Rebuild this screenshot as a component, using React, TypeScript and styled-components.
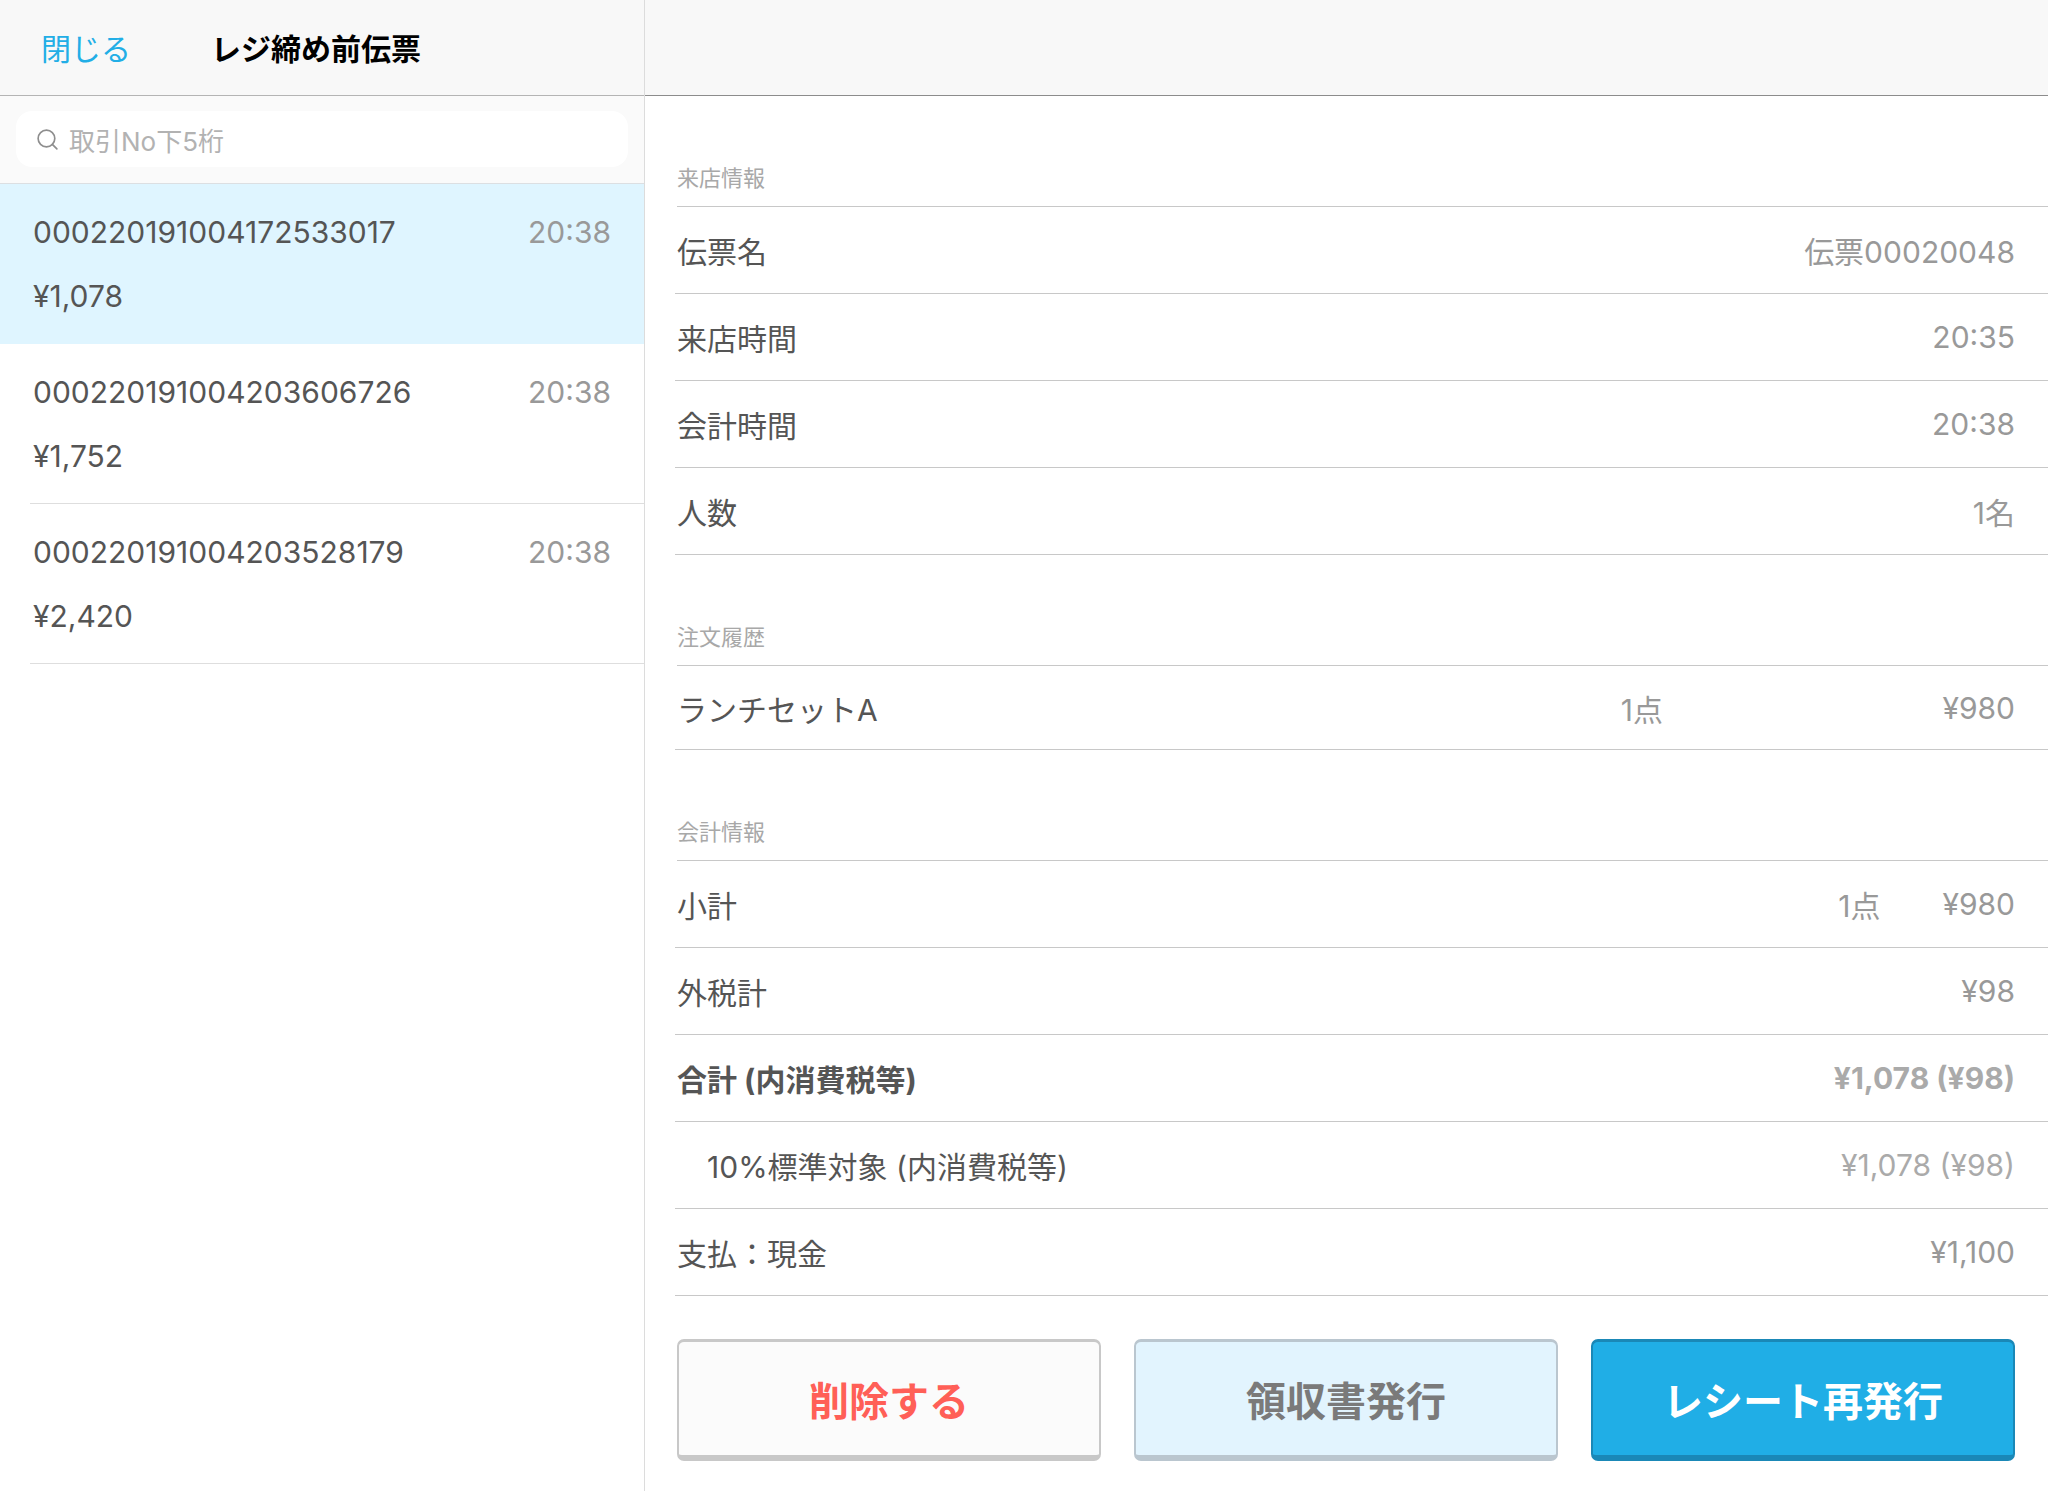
import React from 'react';
import styled, { createGlobalStyle } from 'styled-components';
import { Search } from 'lucide-react';

const GlobalStyle = createGlobalStyle`
  html, body {
    margin: 0;
    padding: 0;
    background: #fff;
  }
  body {
    font-family: Inter, "Noto Sans CJK JP", sans-serif;
  }
  * {
    box-sizing: border-box;
  }
`;

const transactions = [
  { id: '000220191004172533017', time: '20:38', amount: '¥1,078' },
  { id: '000220191004203606726', time: '20:38', amount: '¥1,752' },
  { id: '000220191004203528179', time: '20:38', amount: '¥2,420' },
];

const visitRows = [
  { label: '伝票名', value: '伝票00020048' },
  { label: '来店時間', value: '20:35' },
  { label: '会計時間', value: '20:38' },
  { label: '人数', value: '1名' },
];

export default function App() {
  return (
    <>
      <GlobalStyle />
      <Page>
        <Sidebar>
          <SideHeader>
            <CloseLink>閉じる</CloseLink>
            <Title>レジ締め前伝票</Title>
          </SideHeader>
          <SearchArea>
            <SearchBox>
              <Search size={25} strokeWidth={1.6} color="#8e8e8e" />
              <Placeholder>取引No下5桁</Placeholder>
            </SearchBox>
          </SearchArea>
          {transactions.map((t, i) => (
            <TxItem key={t.id} $selected={i === 0}>
              <TxLine>
                <span>{t.id}</span>
                <TxTime>{t.time}</TxTime>
              </TxLine>
              <TxLine>{t.amount}</TxLine>
            </TxItem>
          ))}
        </Sidebar>
        <Main>
          <MainHeader />
          <SectionHead>来店情報</SectionHead>
          {visitRows.map(r => (
            <Row key={r.label}>
              <RowLabel>{r.label}</RowLabel>
              <RowValue>{r.value}</RowValue>
            </Row>
          ))}
          <SectionHead>注文履歴</SectionHead>
          <Row $short>
            <RowLabel>ランチセットA</RowLabel>
            <RowValue>1点</RowValue>
            <PriceCell>¥980</PriceCell>
          </Row>
          <SectionHead>会計情報</SectionHead>
          <Row>
            <RowLabel>小計</RowLabel>
            <RowValue>1点</RowValue>
            <RowValue>¥980</RowValue>
          </Row>
          <Row>
            <RowLabel>外税計</RowLabel>
            <RowValue>¥98</RowValue>
          </Row>
          <Row>
            <RowLabel $bold>合計 (内消費税等)</RowLabel>
            <RowValue $bold>¥1,078 (¥98)</RowValue>
          </Row>
          <Row>
            <RowLabel $indent>10%標準対象 (内消費税等)</RowLabel>
            <RowValue $light>¥1,078 (¥98)</RowValue>
          </Row>
          <Row>
            <RowLabel>支払：現金</RowLabel>
            <RowValue>¥1,100</RowValue>
          </Row>
          <Actions>
            <ActionButton $variant="danger">削除する</ActionButton>
            <ActionButton $variant="soft">領収書発行</ActionButton>
            <ActionButton $variant="primary">レシート再発行</ActionButton>
          </Actions>
        </Main>
      </Page>
    </>
  );
}

const Page = styled.div`
  display: flex;
  width: 2048px;
  height: 1491px;
  overflow: hidden;
  background: #fff;
`;

const Sidebar = styled.aside`
  width: 645px;
  flex: none;
  border-right: 1px solid #dcdcdc;
`;

const SideHeader = styled.header`
  display: flex;
  align-items: center;
  height: 96px;
  padding: 0 0 2px 41px;
  background: #f8f8f8;
  border-bottom: 1px solid #b4b4b4;
`;

const CloseLink = styled.a`
  font-size: 30px;
  color: #22aee6;
`;

const Title = styled.h1`
  margin: 0 0 0 80px;
  font-size: 30px;
  font-weight: 700;
  color: #000;
`;

const SearchArea = styled.div`
  height: 88px;
  padding: 15px 16px 0;
  background: #fafafa;
  border-bottom: 1px solid #dcdfe2;
`;

const SearchBox = styled.div`
  display: flex;
  align-items: center;
  gap: 9px;
  height: 56px;
  padding-left: 19px;
  background: #fff;
  border-radius: 16px;
`;

const Placeholder = styled.span`
  font-size: 26px;
  color: #b2b2b2;
`;

const TxItem = styled.div<{ $selected?: boolean }>`
  display: flex;
  flex-direction: column;
  justify-content: center;
  height: 160px;
  margin-left: ${p => (p.$selected ? '0' : '30px')};
  padding: 0 33px 0 ${p => (p.$selected ? '33px' : '3px')};
  background: ${p => (p.$selected ? '#dff5ff' : 'transparent')};
  border-bottom: ${p => (p.$selected ? 'none' : '1px solid #dedede')};
`;

const TxLine = styled.div`
  display: flex;
  justify-content: space-between;
  align-items: center;
  height: 64px;
  font-size: 30px;
  color: #555;
`;

const TxTime = styled.span`
  color: #999;
`;

const Main = styled.main`
  flex: 1;
  min-width: 0;
  padding-left: 32px;
`;

const MainHeader = styled.div`
  height: 96px;
  margin-left: -32px;
  background: #f8f8f8;
  border-bottom: 1px solid #8c8c8c;
`;

const SectionHead = styled.h2`
  display: flex;
  align-items: flex-end;
  height: 111px;
  margin: 0;
  padding-bottom: 14px;
  font-size: 22px;
  font-weight: 400;
  color: #a8a8a8;
  border-bottom: 1px solid #c8c8c8;
`;

const Row = styled.div<{ $short?: boolean }>`
  display: flex;
  align-items: center;
  gap: 62px;
  height: ${p => (p.$short ? '84px' : '87px')};
  margin-left: -2px;
  padding: 0 33px 0 2px;
  border-bottom: 1px solid #c8c8c8;
`;

const RowLabel = styled.span<{ $bold?: boolean; $indent?: boolean }>`
  flex: 1;
  padding-left: ${p => (p.$indent ? '30px' : '0')};
  font-size: 30px;
  font-weight: ${p => (p.$bold ? 700 : 400)};
  color: #555;
`;

const RowValue = styled.span<{ $bold?: boolean; $light?: boolean }>`
  font-size: 30px;
  font-weight: ${p => (p.$bold ? 700 : 400)};
  color: ${p => (p.$light || p.$bold ? '#aaa' : '#999')};
`;

const PriceCell = styled(RowValue)`
  width: 290px;
  text-align: right;
`;

const Actions = styled.div`
  display: flex;
  gap: 33px;
  padding: 43px 33px 0 0;
`;

const buttonColors = {
  danger: { bg: '#fbfbfb', edge: '#c8c8c8', text: '#ff5f57' },
  soft: { bg: '#e2f4fe', edge: '#bac6cf', text: '#7a7a7a' },
  primary: { bg: '#20aee6', edge: '#1a88b7', text: '#fff' },
};

const ActionButton = styled.button<{ $variant: keyof typeof buttonColors }>`
  flex: 1;
  height: 122px;
  padding: 0;
  font-family: inherit;
  font-size: 40px;
  font-weight: 700;
  color: ${p => buttonColors[p.$variant].text};
  background: ${p => buttonColors[p.$variant].bg};
  border: 2px solid ${p => buttonColors[p.$variant].edge};
  border-top-width: 3px;
  border-bottom-width: 6px;
  border-radius: 7px;
`;
